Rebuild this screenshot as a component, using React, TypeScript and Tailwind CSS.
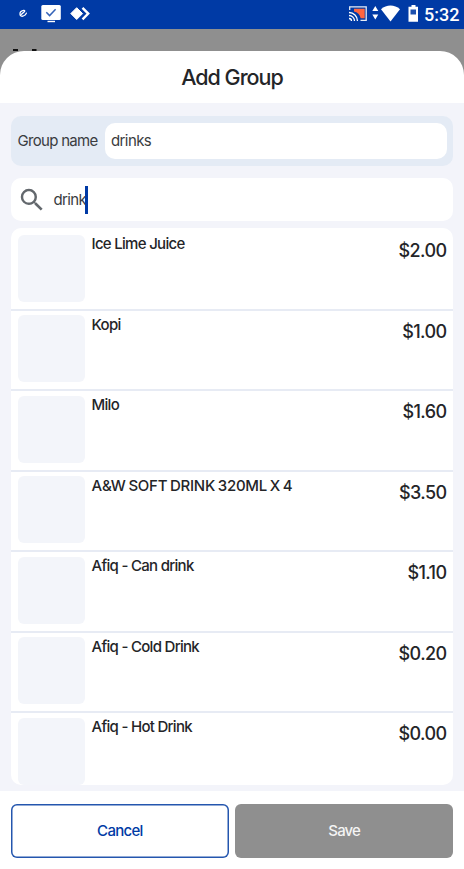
import React, { useState } from 'react';
import { clsx } from 'clsx';
import { MdSearch } from 'react-icons/md';

interface Item {
  name: string;
  price: number;
}

const items: Item[] = [
  { name: 'Ice Lime Juice', price: 2 },
  { name: 'Kopi', price: 1 },
  { name: 'Milo', price: 1.6 },
  { name: 'A&W SOFT DRINK 320ML X 4', price: 3.5 },
  { name: 'Afiq - Can drink', price: 1.1 },
  { name: 'Afiq - Cold Drink', price: 0.2 },
  { name: 'Afiq - Hot Drink', price: 0 },
];

const StatusBar: React.FC = () => (
  <div className="flex h-[29px] shrink-0 items-center justify-between bg-[#003aa5] text-white">
    <svg width="100" height="29" viewBox="0 0 100 29" fill="none">
      <path d="M21.5 14.200l3-2.600c.7-.8-.2-1.500-1.200-1.200-1.900.5-3.400 2.100-3.300 3.700.1 1.700 1.700 2.600 3.300 1.900 1.500-.6 2.600-1.500 3.100-2.900" stroke="#fff" strokeWidth="1.300" strokeLinecap="round" />
      <rect x="41.300" y="5" width="19.500" height="15" rx="1.500" fill="#fff" />
      <path d="M47.500 21.500h7.500" stroke="#fff" strokeWidth="1.400" />
      <path d="M46.300 12.300l3.300 3.300 6-6.300" stroke="#3563b8" strokeWidth="1.500" />
      <path d="M76.700 7.700l5.900 5.900-5.900 5.900-5.900-5.900z" fill="#fff" stroke="#fff" strokeWidth="1" strokeLinejoin="round" />
      <path d="M82.500 7.900l5.700 5.700-5.700 5.700" stroke="#fff" strokeWidth="2.400" />
    </svg>
    <div className="flex items-center">
      <svg width="76" height="29" viewBox="345 0 76 29" fill="none">
        <path d="M354 8.700h10.700v9.500h-4c-.7-3.500-3.200-6-6.700-6.700z" fill="#ff6540" />
        <path d="M349.700 10V6.800h16.500v13.500H360.500" stroke="#e6edf8" strokeWidth="1.300" />
        <path d="M349 18.500a2.500 2.500 0 0 1 2.500 2.500M349 15.500a5.500 5.500 0 0 1 5.500 5.500M349 12.500a8.500 8.500 0 0 1 8.500 8.500" stroke="#fff" strokeWidth="1.300" />
        <path d="M375.300 6l3 5h-6zM375.300 19.500l3-5h-6z" fill="#fff" />
        <path d="M381 9.300c5.500-5 13.500-5 19 0L390.500 21.500z" fill="#fff" />
        <path d="M411.500 5h4v1.800h2.500v15h-9.500v-15h3z" fill="#fff" />
        <path d="M410.500 9.500h5.500v5h-5.500z" fill="#1d50ae" />
      </svg>
      <span className="w-[43px] pl-[3px] font-[Roboto,sans-serif] text-[18px] leading-none font-medium">5:32</span>
    </div>
  </div>
);

const ItemRow: React.FC<{ item: Item }> = ({ item }) => {
  const allCaps = item.name === item.name.toUpperCase();

  return (
    <li className="flex h-[80.5px] shrink-0 items-start border-t-2 border-[#e7ebf4] px-[6.5px] pt-[4.5px] first:border-t-0 first:pt-[6.5px]">
      <div className="h-[67px] w-[67px] shrink-0 rounded-md bg-[#f3f5fa]" />
      <span
        className={clsx(
          'mt-[1.5px] ml-[7px] flex-1 text-[15px] leading-[15px] font-medium',
          allCaps ? 'tracking-[-0.25px] [word-spacing:-1px]' : 'tracking-[-0.7px]'
        )}
      >
        {item.name}
      </span>
      <span className="mt-[6.5px] text-[18px] leading-5 font-medium tracking-[-0.6px]">${item.price.toFixed(2)}</span>
    </li>
  );
};

export default function App() {
  const [groupName, setGroupName] = useState('drinks');
  const query = 'drink';

  return (
    <div className="flex h-[869px] w-full flex-col overflow-hidden bg-[#8f8f8f] font-[Inter,sans-serif] text-[#242528]">
      <StatusBar />
      {/* tops of the dimmed page heading, behind the sheet */}
      <svg className="block h-[22px] w-full shrink-0" aria-hidden="true">
        <rect x="13" y="20" width="5" height="3" fill="#111" />
        <rect x="32" y="20" width="4.500" height="3" fill="#111" />
      </svg>

      <div className="flex flex-1 flex-col overflow-hidden rounded-t-[24px] bg-white">
        <header className="flex h-[52px] shrink-0 items-center justify-center pt-0.5">
          <h1 className="text-[21.5px] leading-none font-medium tracking-[-1px]">Add Group</h1>
        </header>

        <main className="flex h-[688px] shrink-0 flex-col bg-[#f3f4fa] px-[11px] pt-[13px] pb-1.5">
          <label className="flex h-[49.5px] shrink-0 items-center rounded-[10px] bg-[#e4ebf5] px-[6.5px] text-[15px] text-[#3a3c40]">
            <span className="w-[87.5px] tracking-[-0.7px] whitespace-nowrap">Group name</span>
            <input
              value={groupName}
              onChange={(e) => setGroupName(e.target.value)}
              className="h-9 min-w-0 flex-1 rounded-[10px] bg-white px-1.5 tracking-[-0.6px] outline-none"
            />
          </label>

          <div className="mt-[12.5px] flex h-[43px] shrink-0 items-center rounded-[10px] bg-white pt-px text-[15px] text-[#3a3c40]">
            <MdSearch className="ml-1.5 h-[30px] w-[30px] text-[#63686d]" />
            <span className="ml-[6.5px] pt-px tracking-[-0.65px]">{query}</span>
            <span className="-ml-px h-[28px] w-[3px] bg-[#003aa5]" />
          </div>

          <ul className="mt-[7px] flex flex-1 flex-col overflow-hidden rounded-[10px] bg-white">
            {items.map((item) => (
              <ItemRow key={item.name} item={item} />
            ))}
          </ul>
        </main>

        <footer className="flex gap-[6.5px] px-[11px] pt-[13px]">
          <button className="h-[54px] flex-1 rounded-md text-[15px] font-medium tracking-[-0.7px] text-[#003aa5] shadow-[inset_0_0_0_1.5px_#2456ae]">Cancel</button>
          <button className="h-[54px] flex-1 rounded-md bg-[#8f8f8f] text-[15px] font-medium tracking-[-0.9px] text-[#f4f4f4]">Save</button>
        </footer>
      </div>
    </div>
  );
}
